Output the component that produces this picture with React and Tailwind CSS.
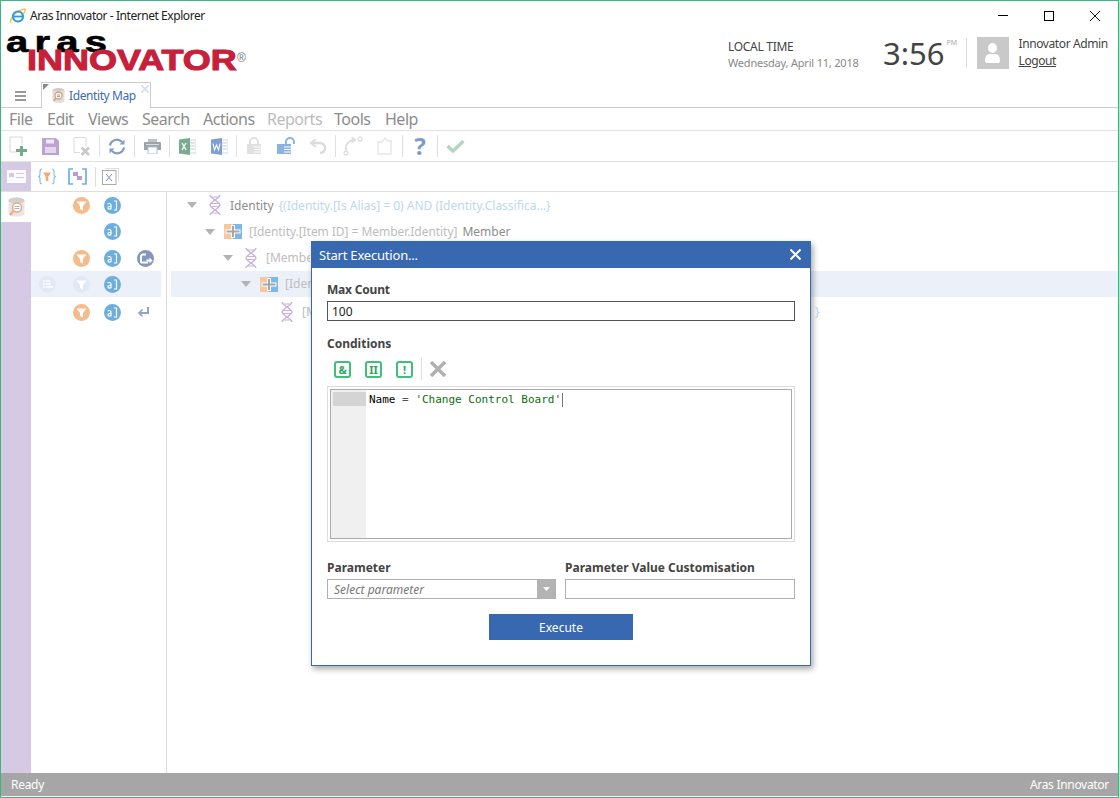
import React from "react";

const F = { fontFamily: '"Noto Sans", "Open Sans", sans-serif' };

function Dna({ className = "" }) {
  return (
    <svg width="14" height="20" viewBox="0 0 14 20" fill="none" stroke="#c8b2de" strokeWidth="1.500" className={className}>
      <path d="M12 0C12 3 2 7 2 10C2 13 12 17 12 20" />
      <path d="M2 0C2 3 12 7 12 10C12 13 2 17 2 20" />
      <path d="M3.500 2h7M3 8.500h8M3 11.500h8M3.500 18h7" strokeWidth="1" />
    </svg>
  );
}
function Join() {
  return (
    <svg width="18" height="15" viewBox="0 0 18 15">
      <rect x="0" y="0" width="9" height="15" fill="#f6c8a2" />
      <rect x="9" y="0" width="9" height="15" fill="#7db9e8" />
      <path d="M7 1h4v4.500h5.500v4H11V14H7V9.500H1.500v-4H7z" fill="#fff" />
      <path d="M8 2h2v4.500h5.500v2H10V13H8V8.500H2.500v-2H8z" fill="#a6a6a6" />
    </svg>
  );
}
function Arrow() {
  return (
    <svg width="10" height="6" viewBox="0 0 10 6"><path d="M0 0h10L5 6z" fill="#b3b3b3" /></svg>
  );
}
function Filter({ bg = "#f6bb8b" }) {
  return (
    <svg width="17" height="17" viewBox="0 0 17 17">
      <circle cx="8.500" cy="8.500" r="8.500" fill={bg} />
      <path d="M3.500 4.500h10L10 9v4.500l-3-1.500V9z" fill="#fff" />
    </svg>
  );
}
function Alias() {
  return (
    <svg width="17" height="17" viewBox="0 0 17 17">
      <circle cx="8.500" cy="8.500" r="8.500" fill="#6cafde" />
      <path d="M7 7.800a2 2 0 0 0-3.400-.6M7 7.800v4.400M7 9.500H5.300a1.300 1.300 0 0 0 0 2.700C6 12.200 6.700 11.800 7 11" fill="none" stroke="#fff" strokeWidth="1.200" />
      <path d="M10 4h2.500v9H10" fill="none" stroke="#fff" strokeWidth="1.200" />
    </svg>
  );
}
function ShareC() {
  return (
    <svg width="17" height="17" viewBox="0 0 17 17">
      <circle cx="8.500" cy="8.500" r="8.500" fill="#8497bd" />
      <path d="M4 13V6.500a2 2 0 0 1 2-2h3M4 12.500h7" fill="none" stroke="#fff" strokeWidth="2" />
      <path d="M9.500 9.500h3V7.500l3 3-3 3v-2h-3z" fill="#fff" />
    </svg>
  );
}
function EnterI() {
  return (
    <svg width="13" height="11" viewBox="0 0 13 11" fill="none" stroke="#8fa5cc" strokeWidth="2">
      <path d="M11 0v6H3" />
      <path d="M5.500 2.500 2 6l3.500 3.500" strokeWidth="1.700" />
    </svg>
  );
}
function ListC() {
  return (
    <svg width="17" height="17" viewBox="0 0 17 17">
      <circle cx="8.500" cy="8.500" r="8.500" fill="#e0e9f5" />
      <path d="M4 5h2M7 5h4M4 8h2M7 8h5M4 11h2M7 11h7" stroke="#fff" strokeWidth="1.500" />
    </svg>
  );
}

function Sep({ h = "h-[22px]" }) {
  return <div className={`w-px ${h} bg-[#e0e0e0] mx-px`} />;
}
function Btn({ children }) {
  return <div className="w-8 h-full flex items-center justify-center">{children}</div>;
}

const NewI = () => (
  <svg width="20" height="20" viewBox="0 0 20 20" fill="none">
    <path d="M14 1H2v15h7M14 1v8" stroke="#d5d5d5" strokeWidth="1" />
    <path d="M12 10h3v3h4v3h-4v4h-3v-4H8v-3h4z" fill="#74ab8f" />
  </svg>
);
const SaveI = () => (
  <svg width="17" height="17" viewBox="0 0 17 17">
    <path d="M0 0h14l3 3v14H0z" fill="#bca3d4" />
    <rect x="4" y="1.500" width="8" height="4" fill="#eee8f4" />
    <rect x="3" y="9" width="11" height="6" fill="#e2d8ec" />
  </svg>
);
const DelI = () => (
  <svg width="18" height="19" viewBox="0 0 18 19" fill="none">
    <path d="M1 .5h12v9M1 .5v15h6" stroke="#dcdcdc" />
    <path d="M8.500 10.500 16 18M16 10.500 8.500 18" stroke="#c8c8c8" strokeWidth="2.500" />
  </svg>
);
const RefreshI = () => (
  <svg width="18" height="17" viewBox="0 0 18 17" fill="none" stroke="#7f9bc6" strokeWidth="2.200">
    <path d="M2 7.500A7 7 0 0 1 14 4" />
    <path d="M16 9.500A7 7 0 0 1 4 13" />
    <path d="M16.500 1.500v5h-5zM1.500 15.500v-5h5z" fill="#7f9bc6" stroke="none" />
  </svg>
);
const PrintI = () => (
  <svg width="17" height="15" viewBox="0 0 17 15">
    <rect x="4" y="0" width="9" height="3" fill="#c3c3c3" />
    <path d="M1 3h15a1 1 0 0 1 1 1v7H0V4a1 1 0 0 1 1-1z" fill="#9ca3aa" />
    <rect x="4" y="8" width="9" height="7" fill="#fff" stroke="#a6c4e0" />
    <rect x="2" y="5" width="13" height="1" fill="#d8dcdf" />
  </svg>
);
const OfficeI = ({ c, l }) => (
  <svg width="17" height="17" viewBox="0 0 17 17">
    <rect x="8" y="2" width="9" height="13" fill="#fff" stroke="#d0d8d8" />
    <path d="M10 5h6M10 8h6M10 11h6" stroke={c} strokeWidth="1" opacity="0.5" />
    <path d="M0 1.500 11 0v17L0 15.500z" fill={c} />
    {l === "x" ? (
      <path d="M3 5l4 7M7 5l-4 7" stroke="#fff" strokeWidth="1.300" />
    ) : (
      <path d="M2 5.500l1.500 6.500 2-5 2 5 1.500-6.500" stroke="#fff" strokeWidth="1.100" fill="none" />
    )}
  </svg>
);
const LockI = ({ open }) => (
  <svg width="20" height="18" viewBox="0 0 20 18" fill="none">
    {open ? (
      <>
        <path d="M10 7V5a4 4 0 0 1 8 0v2" stroke="#8db2de" strokeWidth="2" />
        <rect x="1" y="7" width="14" height="10" fill="#8db2de" />
        <path d="M8 10h7M8 12.500h7M8 15h7" stroke="#fff" />
      </>
    ) : (
      <>
        <path d="M6 7V5a4 4 0 0 1 8 0v2" stroke="#e0e0e0" strokeWidth="2" />
        <rect x="3" y="7" width="14" height="10" fill="#e0e0e0" />
        <path d="M10 10h7M10 12.500h7M10 15h7" stroke="#fff" />
      </>
    )}
  </svg>
);
const UndoI = () => (
  <svg width="18" height="15" viewBox="0 0 18 15" fill="none" stroke="#dcdcdc" strokeWidth="2.500">
    <path d="M3 4h8a5 5 0 0 1 5 5c0 3-2 5-5 5" />
    <path d="M7 0 2 4l5 4" strokeWidth="2" />
  </svg>
);
const RedoI = () => (
  <svg width="20" height="20" viewBox="0 0 20 20" fill="none" stroke="#dedede">
    <path d="M3 14C2 9 5 5 10 4" strokeWidth="2" />
    <path d="M9 1l4 3-4 3z" fill="#dedede" />
    <circle cx="3" cy="17" r="2" strokeWidth="1.300" />
    <circle cx="17" cy="3" r="2" strokeWidth="1.300" />
  </svg>
);
const DocI = () => (
  <svg width="16" height="18" viewBox="0 0 16 18" fill="none" stroke="#e6e6e6" strokeWidth="1.400">
    <path d="M1 5h4l3-4 3 3h3v13H1z" />
  </svg>
);
const CheckI = () => (
  <svg width="19" height="14" viewBox="0 0 19 14" fill="none" stroke="#b7d4c6" strokeWidth="3.500">
    <path d="M1.500 7 7 12 17.500 2" />
  </svg>
);
const CardI = () => (
  <svg width="19" height="13" viewBox="0 0 19 13">
    <rect x="0" y="0" width="19" height="13" fill="#fff" opacity="0.9" />
    <rect x="2" y="3" width="5" height="4" fill="#d5c8e3" />
    <path d="M9 3.500h8M9 7.500h8" stroke="#d5c8e3" />
  </svg>
);
const BraceT = () => (
  <svg width="20" height="17" viewBox="0 0 20 17" fill="none">
    <path d="M5 1C3 1 3 2 3 4v2C3 8 2 8.500 1 8.500 2 8.500 3 9 3 11v2c0 2 0 3 2 3M15 1c2 0 2 1 2 3v2c0 2 1 2.500 2 2.500-1 0-2 .5-2 2.500v2c0 2 0 3-2 3" stroke="#8cc0ec" strokeWidth="1.200" />
    <path d="M6 4.500h8L11.300 8.500v5l-2.600-1V8.500z" fill="#f2a874" />
  </svg>
);
const BracketN = () => (
  <svg width="19" height="17" viewBox="0 0 19 17" fill="none">
    <path d="M5 1H1v15h4M14 1h4v15h-4" stroke="#6eb0e4" strokeWidth="1.700" />
    <rect x="5" y="4" width="5" height="4" fill="#b99cd6" />
    <rect x="9" y="8" width="5" height="4" fill="#b99cd6" />
  </svg>
);
const XDoc = () => (
  <svg width="17" height="17" viewBox="0 0 17 17" fill="none">
    <path d="M3 .5h13.500V14" stroke="#dedede" />
    <rect x=".5" y="2.500" width="13.500" height="14" stroke="#aaa" />
    <path d="M4 6l6 7M10 6l-6 7" stroke="#7f93bd" />
  </svg>
);
const DbI = () => (
  <svg width="19" height="21" viewBox="0 0 19 21" fill="none">
    <ellipse cx="9.500" cy="3.500" rx="8" ry="3" fill="#d7d7d7" />
    <path d="M1.500 3.500v13c0 1.700 3.600 3 8 3s8-1.300 8-3v-13" fill="#e6e6e6" />
    <ellipse cx="9.500" cy="3.500" rx="8" ry="3" fill="#cfcfcf" />
    <circle cx="10" cy="10.500" r="4.500" fill="#fff" stroke="#f2a874" strokeWidth="1.500" />
    <path d="M7.500 9.500h5M7.500 11.500h5" stroke="#8cb9e3" />
    <path d="M6.500 14 3 18" stroke="#f2a874" strokeWidth="2" />
  </svg>
);
const Cond = ({ children }) => (
  <div className="w-[17px] h-[17px] border-2 border-[#3fbf78] rounded-[3px] flex items-center justify-center text-[11px] font-bold text-[#2aa860] leading-none">
    {children}
  </div>
);

function IconRow({ a, b, c, d, active, h = "h-[26px]" }) {
  return (
    <div className={`${h} flex items-center ${active ? "bg-[#ecf1f9]" : ""}`}>
      <div className="w-[32px] pl-[8px] flex">{a}</div>
      <div className="w-[32px] pl-[10px] flex">{b}</div>
      <div className="w-[32px] pl-[9px] flex">{c}</div>
      <div className="w-[34px] pl-[10px] flex justify-start">{d}</div>
    </div>
  );
}

function TreeRow({ indent, arrow, icon, children, active, h = "h-[26px]" }) {
  return (
    <div className={`${h} flex items-center whitespace-nowrap text-[12px] ${active ? "bg-[#ecf1f9]" : ""}`} style={{ paddingLeft: indent }}>
      {arrow ? <div className={`${arrow} flex`}><Arrow /></div> : null}
      {icon}
      {children}
    </div>
  );
}

export default function App() {
  return (
    <div className="relative w-[1119px] h-[798px] bg-white border border-[#3cb67f] overflow-hidden flex flex-col text-[#555]" style={F}>
      {/* title bar */}
      <div className="h-[29px] shrink-0 flex items-center pl-[9px] relative">
        <svg width="16" height="16" viewBox="0 0 16 16" className="mr-[4px]" fill="none">
          <path d="M1 15C-1 11 6 2 15 1c1 3-1 4-2 5" stroke="#f5c242" strokeWidth="1.300" />
          <circle cx="8" cy="8.500" r="5" stroke="#2f9be0" strokeWidth="2.200" />
          <path d="M4 8.500h8" stroke="#2f9be0" strokeWidth="1.800" />
        </svg>
        <span className="text-[12px] text-[#222] tracking-[-0.44px]">Aras Innovator - Internet Explorer</span>
        <div className="ml-auto flex items-center pr-[18px]">
          <div className="w-[10px] h-px bg-black mr-[36px]" />
          <div className="w-[10px] h-[10px] border border-black mr-[36px]" />
          <svg width="10" height="10" viewBox="0 0 10 10" stroke="#111"><path d="M0 0l10 10M10 0 0 10" /></svg>
        </div>
      </div>
      {/* header */}
      <div className="h-[52px] shrink-0 flex relative">
        <div className="w-[248px] pl-[5px] pt-[2px] relative" style={{ fontFamily: '"Liberation Sans", sans-serif' }}>
          <div className="text-[29px] leading-[20px] h-[18px] font-bold text-black origin-left scale-x-[1.38] tracking-[4.500px]" style={{ WebkitTextStroke: "0.6px #000" }}>aras</div>
          <div className="text-[29px] leading-[21px] h-[21px] font-bold text-[#c6203a] origin-left scale-x-[1.24] ml-[21px]" style={{ WebkitTextStroke: "1px #c6203a" }}>INNOVATOR</div>
          <span className="absolute left-[236px] top-[19px] text-[12px] text-[#777]">®</span>
        </div>
        <div className="ml-[479px] pt-[8px] w-[155px]">
          <div className="text-[12px] leading-[17px] text-[#444] tracking-[-0.3px]">LOCAL TIME</div>
          <div className="text-[11px] leading-[15px] text-[#888] tracking-[-0.2px]">Wednesday, April 11, 2018</div>
        </div>
        <div className="text-[31px] leading-[46px] text-[#444]">3:56</div>
        <div className="text-[7px] text-[#aaa] mt-[8px] ml-[2px] w-[19px]">PM</div>
        <div className="w-px h-[30px] bg-[#ddd] mt-[8px]" />
        <div className="w-[32px] h-[32px] bg-[#c9c9c9] ml-[10px] mt-[7px] flex items-center justify-center">
          <svg width="15" height="20" viewBox="0 0 15 20" fill="#fff">
            <ellipse cx="7.500" cy="5" rx="4.500" ry="5" />
            <path d="M0 18c0-6 3-7 5-7h5c2 0 5 1 5 7a2 2 0 0 1-2 2H2a2 2 0 0 1-2-2z" />
          </svg>
        </div>
        <div className="ml-[10px] pt-[5px] text-[12px] text-[#444] tracking-[-0.4px]">
          <div className="leading-[17px]">Innovator Admin</div>
          <div className="leading-[17px] underline">Logout</div>
        </div>
      </div>
      {/* tab bar */}
      <div className="h-[26px] shrink-0 border-b border-[#ccc] flex items-end relative">
        <div className="w-[40px] h-full flex items-center pl-[14px] pt-[2px]">
          <div className="w-[11px] h-[10px] border-y-2 border-[#999] relative flex items-center"><div className="w-full h-[2px] bg-[#999]" /></div>
        </div>
        <div className="relative w-[110px] h-[26px] -mb-px border border-b-0 border-[#ccc] bg-white flex items-center pl-[10px]">
          <div className="absolute left-[1px] top-[1px] w-0 h-0 border-t-[6px] border-r-[6px] border-t-[#888] border-r-transparent" />
          <DbI2 />
          <span className="text-[12px] text-[#3e6ba8] ml-[4px] tracking-[-0.4px]">Identity Map</span>
          <svg width="8" height="8" viewBox="0 0 8 8" stroke="#d5dfee" strokeWidth="1.800" className="absolute right-[1px] top-[2px]"><path d="M0 0l8 8M8 0 0 8" /></svg>
        </div>
      </div>
      {/* menu */}
      <div className="h-[23px] shrink-0 border-b border-[#e2e2e2] relative flex items-center text-[16px] tracking-[-0.5px]">
        <div className="flex pl-[8px] gap-[14px]">
          <span className="text-[#8c8c8c] w-[24px]">File</span>
          <span className="text-[#8c8c8c] w-[27px]">Edit</span>
          <span className="text-[#8c8c8c] w-[40px]">Views</span>
          <span className="text-[#8c8c8c] w-[47px]">Search</span>
          <span className="text-[#8c8c8c] w-[50px]">Actions</span>
          <span className="text-[#bcbcbc] w-[53px]">Reports</span>
          <span className="text-[#8c8c8c] w-[37px]">Tools</span>
          <span className="text-[#8c8c8c]">Help</span>
        </div>
      </div>
      {/* toolbar */}
      <div className="h-[31px] shrink-0 border-b border-[#e2e2e2] flex items-center pl-[1px]">
        <Btn><NewI /></Btn><Btn><SaveI /></Btn><Btn><DelI /></Btn><Sep />
        <Btn><RefreshI /></Btn><Sep />
        <Btn><PrintI /></Btn><Sep />
        <Btn><OfficeI c="#79ac8e" l="x" /></Btn><Btn><OfficeI c="#7f9fd0" l="w" /></Btn><Sep />
        <Btn><LockI /></Btn><Btn><LockI open /></Btn><Btn><UndoI /></Btn><Sep />
        <Btn><RedoI /></Btn><Btn><DocI /></Btn><Sep />
        <Btn><span className="text-[24px] font-bold text-[#7f9bc6] leading-none">?</span></Btn><Sep />
        <Btn><CheckI /></Btn>
      </div>
      {/* toolbar 2 */}
      <div className="h-[30px] shrink-0 border-b border-[#dedede] flex items-center">
        <div className="w-[30px] h-full bg-[#d6c9e3] flex items-center justify-center"><CardI /></div>
        <div className="w-[31px] h-full flex items-center justify-center"><BraceT /></div>
        <div className="w-[31px] h-full flex items-center justify-center"><BracketN /></div>
        <div className="w-px h-[20px] bg-[#ddd] ml-[2px]" />
        <div className="w-[28px] h-full flex items-center justify-center"><XDoc /></div>
      </div>
      {/* main */}
      <div className="flex-1 flex min-h-0">
        <div className="w-[30px] bg-[#d6c9e3] shrink-0">
          <div className="h-[30px] bg-white flex items-center justify-center"><DbI /></div>
        </div>
        <div className="w-[130px] shrink-0">
          <IconRow b={<Filter />} c={<Alias />} />
          <IconRow h="h-[27px]" c={<Alias />} />
          <IconRow b={<Filter />} c={<Alias />} d={<ShareC />} />
          <IconRow active a={<ListC />} b={<Filter bg="#e0e9f5" />} c={<Alias />} />
          <IconRow h="h-[30px]" b={<Filter />} c={<Alias />} d={<EnterI />} />
        </div>
        <div className="w-[5px] shrink-0" />
        <div className="flex-1 border-l border-[#dcdcdc] pl-[4px] overflow-hidden">
          <TreeRow indent={16} arrow="w-[21px]" icon={<Dna className="mr-[8px]" />}>
            <span className="text-[#8c8c8c] mr-[5px] pt-[1px]">Identity</span>
            <span className="text-[#bcd8f0] pt-[1px]">{"{(Identity.[Is Alias] = 0) AND (Identity.Classifica...}"}</span>
          </TreeRow>
          <TreeRow h="h-[27px]" indent={34} arrow="w-[19px]" icon={<span className="mr-[7px] flex"><Join /></span>}>
            <span className="text-[#bdbdbd] mr-[5px] tracking-[-0.05px]">[Identity.[Item ID] = Member.Identity]</span>
            <span className="text-[#8c8c8c]">Member</span>
          </TreeRow>
          <TreeRow indent={52} arrow="w-[21px]" icon={<Dna className="mr-[8px]" />}>
            <span className="text-[#bdbdbd] inline-block w-[44px] overflow-hidden">[Member]</span>
          </TreeRow>
          <TreeRow active indent={70} arrow="w-[19px]" icon={<span className="mr-[7px] flex"><Join /></span>}>
            <span className="text-[#bdbdbd] inline-block w-[26px] overflow-hidden">[Identity]</span>
          </TreeRow>
          <TreeRow h="h-[30px]" indent={109} icon={<Dna className="mr-[8px]" />}>
            <span className="text-[#bdbdbd] inline-block w-[9px] overflow-hidden mr-[504px]">[Member]</span>
            <span className="text-[#bcd8f0]">{"}"}</span>
          </TreeRow>
        </div>
      </div>
      {/* status */}
      <div className="h-[23px] shrink-0 bg-[#a6a6a6] flex items-center justify-between pl-[10px] pr-[9px] pt-[1px] text-[12px] text-white tracking-[-0.3px]">
        <span>Ready</span>
        <span>Aras Innovator</span>
      </div>
      <div className="h-[1px] shrink-0 bg-white" />

      {/* dialog */}
      <div className="absolute left-[310px] top-[240px] w-[500px] h-[425px] bg-white border-x border-b border-[#3768b0] shadow-[2px_3px_6px_rgba(0,0,0,0.35)] flex flex-col">
        <div className="h-[27px] shrink-0 bg-[#3768b0] flex items-center justify-between pl-[7px] pr-[9px] text-white">
          <span className="text-[13px] pt-[2px] tracking-[-0.2px]">Start Execution...</span>
          <svg width="11" height="11" viewBox="0 0 11 11" stroke="#fff" strokeWidth="2"><path d="M0.500 0.500l10 10M10.500 0.500l-10 10" /></svg>
        </div>
        <div className="flex-1 px-[15px] pt-[14px] text-[#444]">
          <div className="text-[12px] leading-[16px] font-bold tracking-[-0.2px]">Max Count</div>
          <div className="h-[20px] mt-[3px] border border-[#555] pl-[4px] pt-[1px] text-[12px] text-[#222] flex items-center">100</div>
          <div className="text-[12px] leading-[16px] font-bold mt-[15px]">Conditions</div>
          <div className="flex items-center h-[26px] mt-[4px] pl-[7px]">
            <Cond>&amp;</Cond>
            <div className="ml-[14px]"><Cond>II</Cond></div>
            <div className="ml-[14px]"><Cond>!</Cond></div>
            <div className="w-px h-[22px] bg-[#ddd] ml-[8px]" />
            <svg width="16" height="16" viewBox="0 0 16 16" stroke="#b0b0b0" strokeWidth="3.500" className="ml-[8px]"><path d="M1 1l14 14M15 1 1 15" /></svg>
          </div>
          <div className="h-[156px] mt-[4px] border border-[#dcdcdc] p-[2px]">
            <div className="h-full border border-[#aaa] flex">
              <div className="w-[35px] bg-[#f0f0f0] pt-[2px] pl-[2px] shrink-0">
                <div className="h-[14px] bg-[#d4d4d4]" />
              </div>
              <div className="pl-[3px] pt-[3px] text-[11px] leading-[14px] whitespace-pre flex items-start" style={{ fontFamily: '"DejaVu Sans Mono", monospace' }}>
                <span className="text-black">Name</span><span className="text-[#555]"> = </span><span className="text-[#0c6e0c]">'Change Control Board'</span>
                <span className="w-px h-[14px] bg-[#777] ml-px" />
              </div>
            </div>
          </div>
          <div className="flex gap-[9px] mt-[18px]">
            <div className="w-[229px]">
              <div className="text-[12px] leading-[16px] font-bold">Parameter</div>
              <div className="h-[20px] mt-[3px] border border-[#b0b0b0] flex items-center justify-between pl-[6px] text-[12px] italic text-[#777]">
                <span className="pt-[1px]">Select parameter</span>
                <div className="w-[18px] h-[18px] bg-[#b3b3b3] flex items-center justify-center"><svg width="7" height="4" viewBox="0 0 7 4"><path d="M0 0h7L3.500 4z" fill="#fff" /></svg></div>
              </div>
            </div>
            <div className="flex-1">
              <div className="text-[12px] leading-[16px] font-bold">Parameter Value Customisation</div>
              <div className="h-[20px] mt-[3px] border border-[#b0b0b0]" />
            </div>
          </div>
          <div className="flex justify-center mt-[15px]">
            <div className="w-[144px] h-[26px] pt-[1px] bg-[#3768b0] text-white text-[12px] flex items-center justify-center">Execute</div>
          </div>
        </div>
      </div>
    </div>
  );
}

function DbI2() {
  return (
    <svg width="13" height="15" viewBox="0 0 13 15" fill="none">
      <ellipse cx="6.500" cy="2.500" rx="6" ry="2.500" fill="#c9c9c9" />
      <path d="M.5 2.500v10c0 1.300 2.700 2.500 6 2.500s6-1.200 6-2.500v-10" fill="#dedede" />
      <circle cx="6.500" cy="7.500" r="3.500" fill="#fff" stroke="#e89a62" strokeWidth="1.300" />
      <path d="M5 7h3M5 8.500h3" stroke="#7ba9d8" />
      <path d="M4 10 2 12.500" stroke="#e89a62" strokeWidth="1.500" />
    </svg>
  );
}
